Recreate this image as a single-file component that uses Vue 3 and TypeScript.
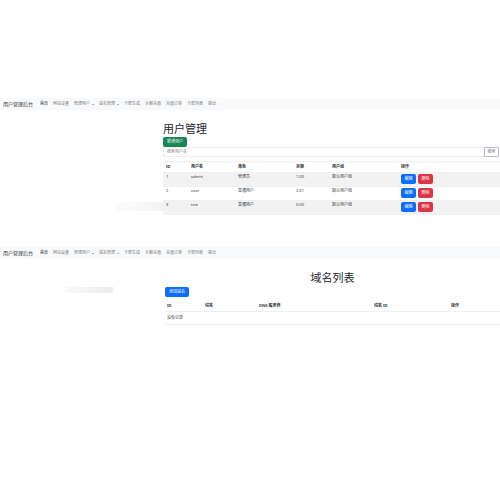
<script setup lang="ts">
interface NavItem {
  label: string
  active?: boolean
  menu?: boolean
}

interface User {
  id: number
  name: string
  role: string
  balance: string
  group: string
}

const brand = '用户管理后台'

const navItems: NavItem[] = [
  { label: '首页', active: true },
  { label: '网站设置' },
  { label: '管理用户', menu: true },
  { label: '域名管理', menu: true },
  { label: '卡密生成' },
  { label: '余额充值' },
  { label: '充值订单' },
  { label: '卡密列表' },
  { label: '登出' },
]

const users: User[] = [
  { id: 1, name: 'admin', role: '管理员', balance: '1.00', group: '默认用户组' },
  { id: 2, name: 'user', role: '普通用户', balance: '2.01', group: '默认用户组' },
  { id: 3, name: 'test', role: '普通用户', balance: '0.00', group: '默认用户组' },
]

const userColumns: string[] = ['ID', '用户名', '角色', '余额', '用户组', '操作']
const domainColumns: string[] = ['ID', '域名', 'DNS 服务商', '域名 ID', '操作']
const screens: string[] = ['users', 'domains']
</script>

<template>
  <div class="page">
    <section v-for="screen in screens" :key="screen" class="screen" :class="screen">
      <nav class="navbar">
        <a class="brand" href="#">{{ brand }}</a>
        <a
          v-for="item in navItems"
          :key="item.label"
          href="#"
          class="link"
          :class="{ active: item.active, menu: item.menu }"
        >{{ item.label }}</a>
      </nav>

      <div class="body">
        <aside class="side"><div class="shade"></div></aside>

        <main v-if="screen === 'users'" class="content">
          <h1>用户管理</h1>
          <button type="button" class="btn green">新增用户</button>
          <form class="search" @submit.prevent>
            <input type="text" placeholder="搜索用户名" aria-label="搜索用户名" />
            <button type="submit">搜索</button>
          </form>
          <table class="user-table">
            <colgroup>
              <col class="u-id" /><col class="u-name" /><col class="u-role" />
              <col class="u-balance" /><col class="u-group" /><col />
            </colgroup>
            <thead>
              <tr><th v-for="c in userColumns" :key="c">{{ c }}</th></tr>
            </thead>
            <tbody>
              <tr v-for="u in users" :key="u.id">
                <td>{{ u.id }}</td>
                <td>{{ u.name }}</td>
                <td>{{ u.role }}</td>
                <td>{{ u.balance }}</td>
                <td>{{ u.group }}</td>
                <td>
                  <div class="actions">
                    <button type="button" class="btn blue">编辑</button>
                    <button type="button" class="btn red">删除</button>
                  </div>
                </td>
              </tr>
            </tbody>
          </table>
        </main>

        <main v-else class="content">
          <h1>域名列表</h1>
          <button type="button" class="btn blue">添加域名</button>
          <table class="domain-table">
            <colgroup>
              <col class="d-id" /><col class="d-name" /><col class="d-dns" />
              <col class="d-zone" /><col />
            </colgroup>
            <thead>
              <tr><th v-for="c in domainColumns" :key="c">{{ c }}</th></tr>
            </thead>
            <tbody>
              <tr><td colspan="5">没有记录</td></tr>
            </tbody>
          </table>
        </main>
      </div>
    </section>
  </div>
</template>

<style>
body {
  margin: 0;
  background: #fff;
}
</style>

<style scoped>
.page {
  padding-top: 98px;
  font-family: "Noto Sans", "Noto Sans CJK SC", sans-serif;
  font-size: 4px;
  line-height: 6px;
  color: #33373b;
}

.screen {
  min-height: 149px;
}

.navbar {
  display: flex;
  align-items: center;
  gap: 5px;
  height: 12px;
  padding: 0 3px;
  background: #f8f9fa;
}

.navbar a {
  color: #777a7d;
  text-decoration: none;
  white-space: nowrap;
}

.navbar .brand {
  margin-right: 2px;
  font-size: 5px;
  color: #303336;
}

.navbar .active {
  color: #222;
}

.navbar .menu {
  display: flex;
  align-items: center;
  gap: 2px;
}

.menu::after {
  content: "";
  border: 1px solid transparent;
  border-top-color: #666;
  border-bottom: 0;
}

.body {
  display: grid;
  grid-template-columns: 163fr 337fr;
}

.domains .body {
  grid-template-columns: 165fr 335fr;
}

.side {
  display: flex;
  align-items: flex-start;
  justify-content: flex-end;
  padding-top: 92px;
}

.domains .side {
  padding: 28px 52px 0 0;
}

.shade {
  width: 48px;
  height: 9px;
  background: linear-gradient(90deg, #fcfcfc, #f3f3f3);
}

.domains .shade {
  height: 6px;
  background: linear-gradient(90deg, #f8f8f8, #ececec);
}

.content {
  min-width: 0;
  padding-top: 12px;
}

h1 {
  margin: 0 0 1px;
  font-size: 11px;
  font-weight: 400;
  line-height: 14px;
  color: #24282c;
}

.domains h1 {
  margin-bottom: 2px;
  text-align: center;
}

button,
input {
  box-sizing: border-box;
  margin: 0;
  font: inherit;
}

.btn {
  display: block;
  height: 10px;
  padding: 0 3px;
  border: 0;
  border-radius: 2px;
  color: #fff;
  white-space: nowrap;
}

.content > .btn {
  width: 24px;
}

.green {
  background: #198754;
}

.blue {
  background: #0d6efd;
}

.red {
  background: #dc3545;
}

.search {
  display: flex;
  height: 10px;
  margin: 0 1px 4px 0;
}

.search input {
  flex: 1;
  min-width: 0;
  padding: 0 3px;
  border: 1px solid #eceef0;
  border-radius: 1px 0 0 1px;
  background: #fff;
  color: #33373b;
}

.search input::placeholder {
  color: #7d8186;
  opacity: 1;
}

.search button {
  width: 15px;
  padding: 0;
  border: 1px solid #b8bdc1;
  border-radius: 0 1px 1px 0;
  background: #fff;
  color: #6c757d;
}

table {
  width: 100%;
  table-layout: fixed;
  border-collapse: separate;
  border-spacing: 0;
}

th,
td {
  padding: 2px 3px;
  text-align: left;
  vertical-align: top;
  border-bottom: 1px solid #eff0f1;
}

th {
  font-weight: 700;
}

.user-table th {
  border-top: 1px solid #f0f1f2;
}

.user-table td {
  height: 12px;
  padding-top: 1px;
  padding-bottom: 0;
}

.user-table tbody tr:nth-child(odd) {
  background: #f2f2f2;
}

.domain-table {
  margin-top: 4px;
}

.domain-table th {
  padding: 2px;
}

.domain-table td {
  padding: 3px 2px;
}

.actions {
  display: flex;
  gap: 2px;
}

.actions .btn {
  width: 15px;
}

.u-id { width: 25px; }
.u-name { width: 47px; }
.u-role { width: 58px; }
.u-balance { width: 36px; }
.u-group { width: 69px; }

.d-id { width: 38px; }
.d-name { width: 54px; }
.d-dns { width: 115px; }
.d-zone { width: 77px; }
</style>
